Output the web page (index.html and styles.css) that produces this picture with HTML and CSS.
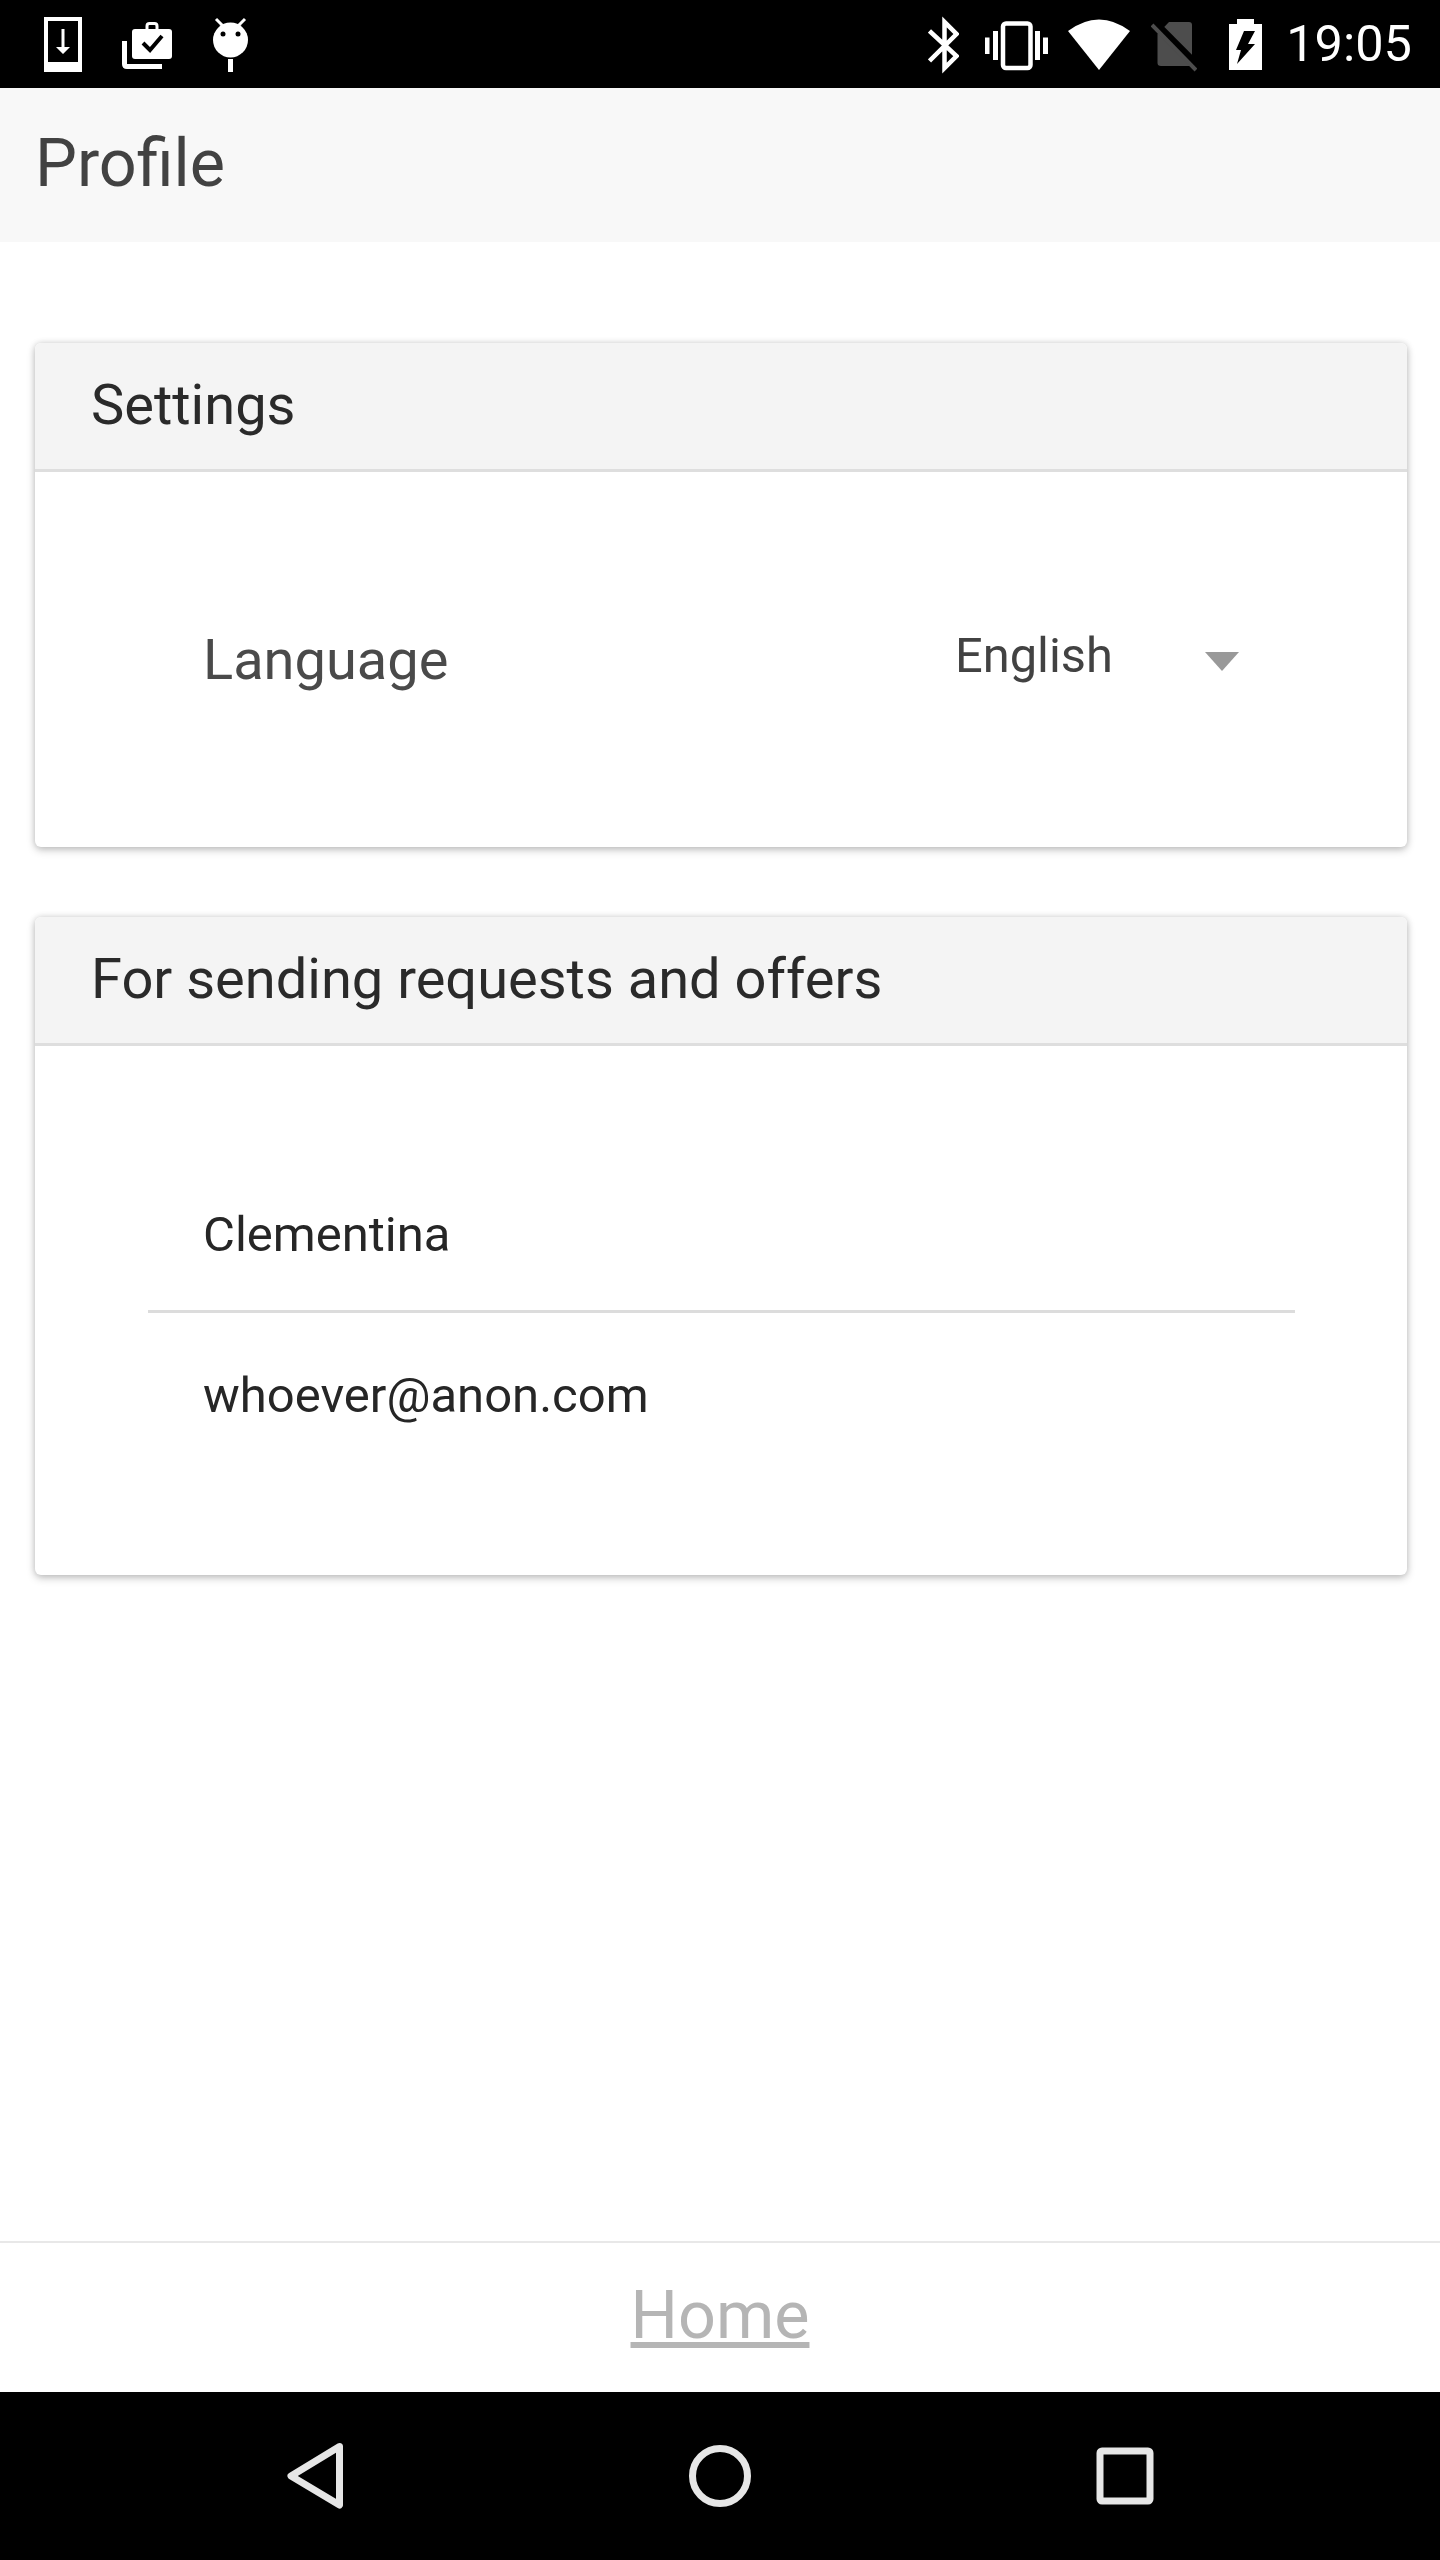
FILE: index.html
```html
<!DOCTYPE html>
<html>
<head>
  <title>Profile</title>
  <link rel="stylesheet" href="styles.css">
</head>
<body>
<div id="screen">
  <div id="status-bar">
    <div class="status-left">
      <svg width="38" height="88" viewBox="44 0 38 88"><path fill="#fff" fill-rule="evenodd" d="M44 17h38v55H44zM48 21v41h30V21z"/><path fill="#fff" d="M61.500 29h3v18H70l-7 7-7-7h5.500z"/></svg>
      <svg width="50" height="88" viewBox="122 0 50 88"><path fill="none" stroke="#fff" stroke-width="5" d="M124.500 41v23q0 2.500 2.500 2.500h35"/><rect x="132" y="29" width="40" height="30" rx="3" fill="#fff"/><path fill="none" stroke="#fff" stroke-width="3" d="M147 30v-4q0-2.500 2.500-2.500h5q2.500 0 2.500 2.500v4"/><path fill="none" stroke="#000" stroke-width="4" d="M143 43l7 7 12-14"/></svg>
      <svg class="ic-droid" width="35" height="88" viewBox="213 0 35 88"><circle cx="230.500" cy="40" r="17.500" fill="#fff"/><circle cx="223" cy="34" r="2.500"/><circle cx="238" cy="34" r="2.500"/><path stroke="#fff" stroke-width="3" d="M216 19l8 8M245 19l-8 8"/><rect x="228" y="59" width="5" height="13" fill="#fff"/></svg>
    </div>
    <div class="status-right">
      <svg class="ic-bt" width="31" height="88" viewBox="928 0 31 88"><path fill="none" stroke="#fff" stroke-width="4.500" d="M929.500 31l27 25-12 12V22l12 12-27 27"/></svg>
      <svg class="ic-vib" width="63" height="88" viewBox="985 0 63 88"><rect x="1003" y="23.500" width="27.500" height="44.500" rx="3" fill="none" stroke="#fff" stroke-width="4.500"/><path fill="#fff" d="M993 31h5v29h-5zM985 37.500h4.500V54H985zM1035 31h5v29h-5zM1043 37.500h5V54h-5z"/></svg>
      <svg class="ic-wifi" width="62" height="88" viewBox="1068 0 62 88"><path fill="#fff" d="M1068 31Q1099 8 1130 31L1099 70z"/></svg>
      <svg class="ic-sim" width="46" height="88" viewBox="1151 0 46 88"><path fill="#4d4d4d" d="M1169 22h20q3 0 3 3v38q0 3-3 3h-28q-3.500 0-3.500-3V34z"/><path stroke="#000" stroke-width="9" d="M1151 20l46 46"/><path stroke="#4d4d4d" stroke-width="4" d="M1152 25l44 45"/></svg>
      <svg class="ic-bat" width="33" height="88" viewBox="1229 0 33 88"><path fill="#fff" fill-rule="evenodd" d="M1237 19h17v5h8v46h-33V24h8zM1244 31l-8 19h5l-4 14 18-20h-7l7-13z"/></svg>
      <span class="clock">19:05</span>
    </div>
  </div>

  <div id="app-bar">Profile</div>

  <div id="content">
    <div class="card card-settings">
      <div class="card-title">Settings</div>
      <div class="lang-row">
        <span class="lang-label">Language</span>
        <div class="lang-select">
          <span class="lang-value">English</span>
          <span class="caret"></span>
        </div>
      </div>
    </div>

    <div class="card card-contact">
      <div class="card-title">For sending requests and offers</div>
      <div class="contact-body">
        <div class="field field-name">Clementina</div>
        <div class="field field-mail">whoever@anon.com</div>
      </div>
    </div>
  </div>

  <div id="footer"><a href="#">Home</a></div>

  <div id="nav-bar">
    <svg width="58" height="70" viewBox="286 2441 58 70"><path fill="none" stroke="#e6e6e6" stroke-width="7" stroke-linejoin="round" d="M339.500 2446.500L291 2476l48.500 29z"/></svg>
    <svg width="64" height="64" viewBox="0 0 64 64"><circle cx="32" cy="32" r="27.500" fill="none" stroke="#e6e6e6" stroke-width="7"/></svg>
    <svg width="58" height="58" viewBox="0 0 58 58"><rect x="4" y="4" width="50" height="50" rx="2" fill="none" stroke="#e6e6e6" stroke-width="7"/></svg>
  </div>
</div>
</body>
</html>
```

FILE: styles.css
```css
body, div, a, span {
  margin: 0;
  padding: 0;
  font-family: Roboto, sans-serif;
}
#screen {
  width: 1440px;
  height: 2560px;
  display: flex;
  flex-direction: column;
  background: #fff;
  overflow: hidden;
}

/* status bar */
#status-bar {
  height: 88px;
  background: #000;
  display: flex;
  justify-content: space-between;
  align-items: center;
  padding: 0 28px 0 44px;
  flex-shrink: 0;
}
.status-left, .status-right {
  display: flex;
  align-items: center;
}
.status-left { gap: 40px; }
.ic-droid { margin-left: 1px; }
.ic-vib { margin-left: 26px; }
.ic-wifi { margin-left: 20px; }
.ic-sim { margin-left: 21px; }
.ic-bat { margin-left: 32px; }
.clock {
  margin-left: 24px;
  color: #fff;
  font-size: 50.500px;
  line-height: 88px;
}

/* title */
#app-bar {
  height: 154px;
  line-height: 150px;
  background: #f8f8f8;
  color: #424242;
  font-size: 66.500px;
  padding-left: 35px;
  flex-shrink: 0;
}

#content {
  flex: 1;
  padding: 101px 33px 0 35px;
  display: flex;
  flex-direction: column;
  gap: 70px;
}
.card {
  background: #fff;
  border-radius: 6px;
  box-shadow: 0 3px 8px rgba(0,0,0,0.22), 0 0 6px rgba(0,0,0,0.13);
}
.card-title {
  height: 126px;
  line-height: 124px;
  padding-left: 56px;
  background: #f4f4f4;
  border-bottom: 3px solid #dedede;
  border-radius: 6px 6px 0 0;
  color: #2a2a2a;
  font-size: 56px;
}
.card-settings { height: 504px; }
.card-contact { height: 658px; }

.lang-row {
  display: flex;
  align-items: center;
  height: 375px;
  padding-left: 168px;
}
.lang-label {
  width: 752px;
  color: #4a4a4a;
  font-size: 56px;
}
.lang-select {
  display: flex;
  align-items: center;
  padding-bottom: 8px;
}
.lang-value {
  width: 250px;
  color: #424242;
  font-size: 48.800px;
}
.caret {
  width: 0;
  height: 0;
  margin-top: 11px;
  border-left: 17px solid transparent;
  border-right: 17px solid transparent;
  border-top: 19px solid #999;
}

.contact-body { padding: 130px 112px 0 113px; }
.field {
  padding-left: 55px;
  color: #262626;
  font-size: 49px;
}
.field-name {
  height: 134px;
  line-height: 118px;
  border-bottom: 3px solid #dcdcdc;
}
.field-mail {
  padding-top: 42px;
  line-height: 82px;
}

/* bottom */
#footer {
  height: 149px;
  border-top: 2px solid #e8e8e8;
  text-align: center;
  line-height: 145px;
  flex-shrink: 0;
}
#footer a {
  color: #b5b5b5;
  font-size: 66.500px;
  text-decoration: underline;
}
#nav-bar {
  height: 168px;
  background: #000;
  display: flex;
  align-items: center;
  flex-shrink: 0;
  padding: 0 286px 0 286px;
  justify-content: space-between;
}
```
